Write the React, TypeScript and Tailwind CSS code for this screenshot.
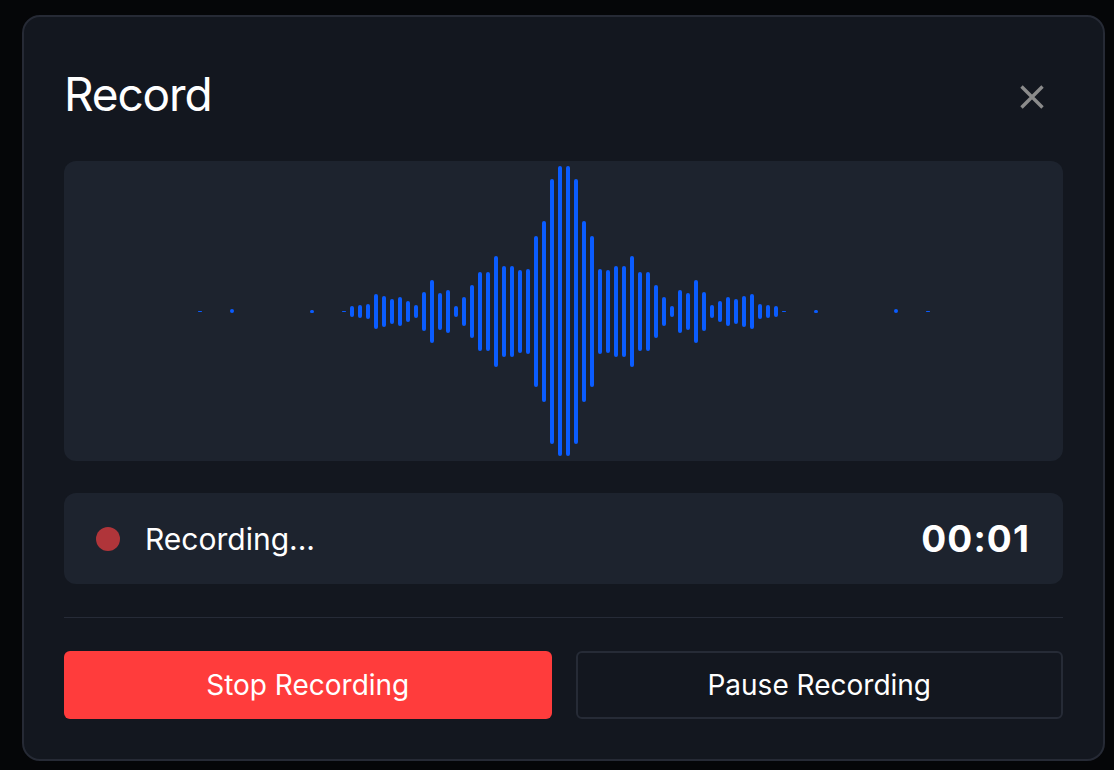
import React from 'react';

// half of the wave, outermost slot first; mirrored for the right side
const HALF_WAVE = [
  1, 0, 0, 0, 4, 0, 0, 0, 0, 0, 0, 0, 0, 0, 3, 0, 0, 0, 1, 11, 13, 15, 35, 31, 25, 29, 21, 13, 39, 63, 37, 43, 11, 29,
  53, 79, 79, 111, 91, 91, 83, 85, 151, 181, 265, 290,
];

const WAVE = [...HALF_WAVE, ...[...HALF_WAVE].reverse()];

const CloseIcon = () => (
  <svg width="24" height="24" viewBox="0 0 24 24" fill="none" stroke="#8b8b8b" strokeWidth="3.4">
    <path d="M1.5 1.5 L22.5 22.5 M22.5 1.5 L1.5 22.5" />
  </svg>
);

const Waveform = () => (
  <div className="h-[300px] rounded-xl bg-[#1d232e] flex items-center justify-center gap-1">
    {WAVE.map((h, i) => (
      <div key={i} className="w-1 rounded-full bg-[#0a5cff]" style={{ height: h }} />
    ))}
  </div>
);

export default function App() {
  return (
    <div className="min-h-screen bg-[#050608] pl-[22px] pt-[15px] pb-[9px]" style={{ fontFamily: 'Inter, "Noto Sans", sans-serif' }}>
      <div className="w-[1083px] rounded-[18px] border-2 border-[#262a35] bg-[#13171f] px-10 pt-10 pb-10 text-white">
        <div className="h-[74px] flex items-center justify-between">
          <h1 className="text-[46px] leading-none tracking-tight font-normal">Record</h1>
          <button className="mr-[19px] mt-[6px]">
            <CloseIcon />
          </button>
        </div>

        <div className="mt-[30px]">
          <Waveform />
        </div>

        <div className="mt-[32px] h-[91px] rounded-xl bg-[#1d232e] px-8 flex items-center">
          <div className="w-6 h-6 rounded-full bg-[#b0353a]" />
          <span className="ml-[25px] text-[30px] leading-none">Recording...</span>
          <span className="ml-auto mr-px text-[37px] leading-none font-bold tracking-[0.03em]">00:01</span>
        </div>

        <div className="mt-[33px] h-px bg-[#262b37]" />

        <div className="mt-[33px] grid grid-cols-2 gap-6">
          <button className="h-[68px] rounded-md bg-[#ff3c3c] text-[28px] text-white">Stop Recording</button>
          <button className="h-[68px] rounded-md border-2 border-[#262b36] text-[28px] text-white">Pause Recording</button>
        </div>
      </div>
    </div>
  );
}
